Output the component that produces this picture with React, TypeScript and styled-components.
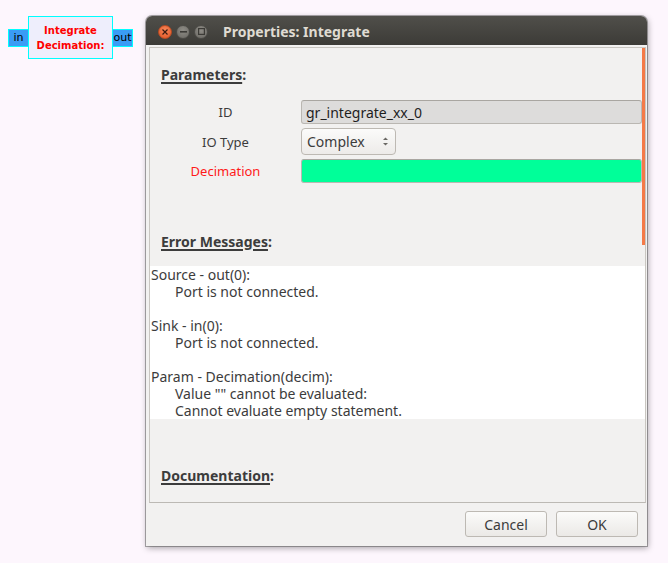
import React from 'react';
import styled, { createGlobalStyle } from 'styled-components';

const Global = createGlobalStyle`
  html, body { margin: 0; padding: 0; background: #fdf6fd; }
  body { font-family: "Noto Sans", "DejaVu Sans", sans-serif; }
`;

const Desktop = styled.div`
  position: relative;
  width: 668px;
  height: 563px;
  overflow: hidden;
  background: #fdf6fd;
`;

/* ---- flow-graph block on the canvas ---- */
const BlockNode = styled.div`
  position: absolute;
  left: 8px;
  top: 16px;
  display: flex;
  align-items: center;
`;

const Port = styled.div<{ $side: 'in' | 'out' }>`
  width: 20px;
  height: 18px;
  box-sizing: border-box;
  background: #3a9cf5;
  border: 1px solid #00ffff;
  ${(p) => (p.$side === 'in' ? 'border-right: none;' : 'border-left: none;')}
  color: #000;
  font: 11px/16px "DejaVu Sans", sans-serif;
  display: flex;
  align-items: center;
  justify-content: center;
`;

const BlockBody = styled.div`
  width: 85px;
  height: 43px;
  box-sizing: border-box;
  background: #eeeefc;
  border: 1px solid #00ffff;
  display: flex;
  flex-direction: column;
  align-items: center;
  justify-content: center;
  color: #ff0000;
  font: bold 10px/15px "DejaVu Sans", sans-serif;
`;

/* ---- dialog window ---- */
const Dialog = styled.div`
  position: absolute;
  left: 146px;
  top: 16px;
  width: 501px;
  height: 530px;
  display: flex;
  flex-direction: column;
  background: #f2f1f0;
  border-radius: 6px 6px 0 0;
  box-shadow: 0 0 0 1px rgba(70, 70, 70, 0.45), 1px 2px 6px rgba(0, 0, 0, 0.35);
`;

const TitleBar = styled.div`
  height: 29px;
  flex: none;
  box-sizing: border-box;
  padding: 2px 0 0 12px;
  display: flex;
  align-items: center;
  background: linear-gradient(#504f4a, #3c3b37);
  border-radius: 6px 6px 0 0;
`;

const WinButtons = styled.div`
  display: flex;
  gap: 4px;
`;

const WinButton = styled.div<{ $kind: 'close' | 'min' | 'max' }>`
  width: 14px;
  height: 14px;
  border-radius: 50%;
  box-sizing: border-box;
  display: flex;
  align-items: center;
  justify-content: center;
  background: ${(p) =>
    p.$kind === 'close'
      ? 'radial-gradient(circle at 50% 35%, #f7875a, #df5423)'
      : 'radial-gradient(circle at 50% 35%, #8e8c86, #6a6863)'};
  border: 1px solid ${(p) => (p.$kind === 'close' ? '#b84a22' : '#4d4c48')};
`;

const Title = styled.div`
  margin-left: 15px;
  color: #dfdbd2;
  font: bold 14px/18px "Noto Sans", sans-serif;
`;

const Frame = styled.div`
  position: relative;
  flex: 1;
  margin: 2px 1px 0 3px;
  border: 1px solid #c9c6c1;
  border-bottom-color: #bcb9b4;
  display: flex;
  flex-direction: column;
  overflow: hidden;
`;

const OverlayScroll = styled.div`
  position: absolute;
  right: 0;
  top: 0;
  width: 3px;
  height: 197px;
  background: #f47a48;
`;

const Heading = styled.div<{ $top: number }>`
  margin: ${(p) => p.$top}px 0 0 11px;
  font: bold 14px/17px "Noto Sans", sans-serif;
  color: #3c3c3c;
  u {
    text-decoration-thickness: 2px;
    text-underline-offset: 2px;
  }
`;

const ParamList = styled.div`
  margin-top: 17px;
  display: grid;
  grid-template-columns: 151px 341px;
  row-gap: 4px;
  align-items: center;
`;

const Label = styled.div<{ $error?: boolean }>`
  text-align: center;
  font: 13px "Noto Sans", sans-serif;
  color: ${(p) => (p.$error ? '#ff1a1a' : '#3c3c3c')};
`;

const Entry = styled.div<{ $bg: string }>`
  height: 24px;
  box-sizing: border-box;
  border: 1px solid #bab7b2;
  border-top-color: #a9a6a1;
  border-radius: 3px;
  background: ${(p) => p.$bg};
  padding-left: 4px;
  display: flex;
  align-items: center;
  font: 14px "Noto Sans", sans-serif;
  color: #1e1e1e;
`;

const ComboCell = styled.div`
  display: flex;
`;

const Combo = styled.div`
  width: 95px;
  height: 27px;
  box-sizing: border-box;
  border: 1px solid #bdb9b3;
  border-radius: 4px;
  background: linear-gradient(#fbfbfa, #edebe9);
  padding: 0 6px 0 5px;
  display: flex;
  align-items: center;
  justify-content: space-between;
  font: 14px "Noto Sans", sans-serif;
  color: #3c3c3c;
`;

const ErrorBox = styled.div`
  margin-top: 16px;
  height: 153px;
  background: #ffffff;
  padding-left: 1px;
  font: 14px/17px "Noto Sans", sans-serif;
  color: #3c3c3c;
`;

const ErrLine = styled.div<{ $indent?: boolean }>`
  height: 17px;
  padding-left: ${(p) => (p.$indent ? 24 : 0)}px;
  white-space: pre;
`;

const ButtonBar = styled.div`
  flex: none;
  height: 43px;
  box-sizing: border-box;
  padding: 8px 9px 0 0;
  display: flex;
  justify-content: flex-end;
  gap: 9px;
`;

const DlgButton = styled.div`
  width: 82px;
  height: 26px;
  box-sizing: border-box;
  border: 1px solid #bdb9b3;
  border-radius: 3px;
  background: linear-gradient(#fbfbfa, #ebe9e6);
  display: flex;
  align-items: center;
  justify-content: center;
  font: 14px "Noto Sans", sans-serif;
  color: #3c3c3c;
`;

const Glyph = styled.svg`
  display: block;
`;

export default function App() {
  return (
    <Desktop>
      <Global />
      <BlockNode>
        <Port $side="in">in</Port>
        <BlockBody>
          <div>Integrate</div>
          <div>Decimation:</div>
        </BlockBody>
        <Port $side="out">out</Port>
      </BlockNode>

      <Dialog>
        <TitleBar>
          <WinButtons>
            <WinButton $kind="close">
              <Glyph width="6" height="6" viewBox="0 0 6 6">
                <path d="M0.5 0.5L5.5 5.5M5.5 0.5L0.5 5.5" stroke="#3a1a10" strokeWidth="1.2" />
              </Glyph>
            </WinButton>
            <WinButton $kind="min">
              <Glyph width="7" height="2" viewBox="0 0 7 2">
                <rect x="0" y="0" width="7" height="1.6" fill="#3c3b37" />
              </Glyph>
            </WinButton>
            <WinButton $kind="max">
              <Glyph width="7" height="7" viewBox="0 0 7 7">
                <rect x="0.6" y="0.6" width="5.8" height="5.8" fill="none" stroke="#3c3b37" strokeWidth="1.2" />
              </Glyph>
            </WinButton>
          </WinButtons>
          <Title>Properties: Integrate</Title>
        </TitleBar>

        <Frame>
          <OverlayScroll />
          <Heading $top={18}>
            <u>Parameters</u>:
          </Heading>
          <ParamList>
            <Label>ID</Label>
            <Entry $bg="#dddcdb">gr_integrate_xx_0</Entry>
            <Label>IO Type</Label>
            <ComboCell>
              <Combo>
                <span>Complex</span>
                <Glyph width="7" height="11" viewBox="0 0 7 11">
                  <path d="M1 4L3.5 1.5L6 4Z" fill="#6a6864" />
                  <path d="M1 7L3.5 9.5L6 7Z" fill="#6a6864" />
                </Glyph>
              </Combo>
            </ComboCell>
            <Label $error>Decimation</Label>
            <Entry $bg="#00ff99" />
          </ParamList>

          <Heading $top={50}>
            <u>Error Messages</u>:
          </Heading>
          <ErrorBox>
            <ErrLine>Source - out(0):</ErrLine>
            <ErrLine $indent>Port is not connected.</ErrLine>
            <ErrLine />
            <ErrLine>Sink - in(0):</ErrLine>
            <ErrLine $indent>Port is not connected.</ErrLine>
            <ErrLine />
            <ErrLine>Param - Decimation(decim):</ErrLine>
            <ErrLine $indent>Value "" cannot be evaluated:</ErrLine>
            <ErrLine $indent>Cannot evaluate empty statement.</ErrLine>
          </ErrorBox>

          <Heading $top={48}>
            <u>Documentation</u>:
          </Heading>
        </Frame>

        <ButtonBar>
          <DlgButton>Cancel</DlgButton>
          <DlgButton>OK</DlgButton>
        </ButtonBar>
      </Dialog>
    </Desktop>
  );
}
